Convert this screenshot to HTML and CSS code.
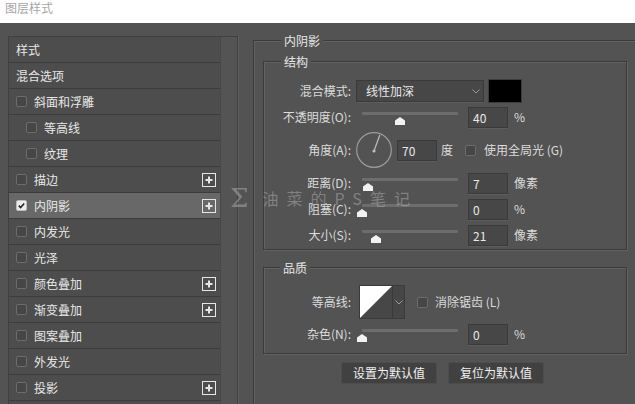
FILE: index.html
```html
<!DOCTYPE html>
<html lang="zh-CN">
<head>
<meta charset="utf-8">
<title>图层样式</title>
<link rel="stylesheet" href="styles.css">
</head>
<body>
<div class="titlebar">图层样式</div>
<div class="main">
  <div class="sidebar">
    <div class="list">
      <div class="row">样式</div>
      <div class="row">混合选项</div>
      <div class="row"><span class="cb"></span>斜面和浮雕</div>
      <div class="row sub"><span class="cb"></span>等高线</div>
      <div class="row sub"><span class="cb"></span>纹理</div>
      <div class="row"><span class="cb"></span>描边<svg class="plus" viewBox="0 0 14 14"><rect x="0.5" y="0.5" width="13" height="13" fill="none" stroke="#e6e6e6"/><path d="M7 3.5v7M3.5 7h7" stroke="#e6e6e6" stroke-width="2"/></svg></div>
      <div class="row active"><span class="cb checked"><svg viewBox="0 0 10 10"><path d="M2 5.2l2 2 4-4.4" fill="none" stroke="#222" stroke-width="1.8"/></svg></span>内阴影<svg class="plus" viewBox="0 0 14 14"><rect x="0.5" y="0.5" width="13" height="13" fill="none" stroke="#e6e6e6"/><path d="M7 3.5v7M3.5 7h7" stroke="#e6e6e6" stroke-width="2"/></svg></div>
      <div class="row"><span class="cb"></span>内发光</div>
      <div class="row"><span class="cb"></span>光泽</div>
      <div class="row"><span class="cb"></span>颜色叠加<svg class="plus" viewBox="0 0 14 14"><rect x="0.5" y="0.5" width="13" height="13" fill="none" stroke="#e6e6e6"/><path d="M7 3.5v7M3.5 7h7" stroke="#e6e6e6" stroke-width="2"/></svg></div>
      <div class="row"><span class="cb"></span>渐变叠加<svg class="plus" viewBox="0 0 14 14"><rect x="0.5" y="0.5" width="13" height="13" fill="none" stroke="#e6e6e6"/><path d="M7 3.5v7M3.5 7h7" stroke="#e6e6e6" stroke-width="2"/></svg></div>
      <div class="row"><span class="cb"></span>图案叠加</div>
      <div class="row"><span class="cb"></span>外发光</div>
      <div class="row"><span class="cb"></span>投影<svg class="plus" viewBox="0 0 14 14"><rect x="0.5" y="0.5" width="13" height="13" fill="none" stroke="#e6e6e6"/><path d="M7 3.5v7M3.5 7h7" stroke="#e6e6e6" stroke-width="2"/></svg></div>
    </div>
    <div class="gutter"></div>
  </div>

  <div class="content">
    <div class="group outer">
      <div class="legend legend-outer">内阴影</div>

      <div class="group inner struct">
        <div class="legend legend-struct">结构</div>

        <div class="frow r-blend">
          <span class="lbl">混合模式:</span>
          <div class="select">线性加深<svg class="chev" viewBox="0 0 8 5"><path d="M0.5 0.5l3.5 3.5 3.5-3.5" fill="none" stroke="#9a9a9a"/></svg></div>
          <div class="swatch"></div>
        </div>

        <div class="frow slider-row">
          <span class="lbl">不透明度(O):</span>
          <div class="slider"><div class="track"></div><div class="thumb" style="margin-left:33px"></div></div>
          <div class="num">40</div><span class="unit">%</span>
        </div>

        <div class="frow r-angle">
          <span class="lbl">角度(A):</span>
          <svg class="dial" viewBox="0 0 36 36"><circle cx="18" cy="18" r="17.3" fill="none" stroke="#9c9c9c" stroke-width="1.2"/><path d="M18 19L23.8 3" stroke="#bdbdbd" stroke-width="1.2"/><circle cx="18" cy="19" r="1.6" fill="#bdbdbd"/></svg>
          <div class="num num-angle">70</div><span class="unit deg">度</span>
          <span class="cb cb-right"></span><span class="opt">使用全局光 (G)</span>
        </div>

        <div class="frow slider-row">
          <span class="lbl">距离(D):</span>
          <div class="slider"><div class="track"></div><div class="thumb" style="margin-left:1px"></div></div>
          <div class="num">7</div><span class="unit">像素</span>
        </div>

        <div class="frow slider-row">
          <span class="lbl">阻塞(C):</span>
          <div class="slider"><div class="track"></div><div class="thumb" style="margin-left:-5px"></div></div>
          <div class="num">0</div><span class="unit">%</span>
        </div>

        <div class="frow slider-row">
          <span class="lbl">大小(S):</span>
          <div class="slider"><div class="track"></div><div class="thumb" style="margin-left:9px"></div></div>
          <div class="num">21</div><span class="unit">像素</span>
        </div>
      </div>

      <div class="group inner quality">
        <div class="legend legend-quality">品质</div>

        <div class="frow r-contour">
          <span class="lbl">等高线:</span>
          <div class="contour">
            <svg class="curve" viewBox="0 0 33 34" preserveAspectRatio="none"><rect width="33" height="34" fill="#474747"/><path d="M0 0H33L0 34Z" fill="#ffffff"/></svg>
            <div class="cdrop"><svg class="chev" viewBox="0 0 8 5"><path d="M0.5 0.5l3.5 3.5 3.5-3.5" fill="none" stroke="#9a9a9a"/></svg></div>
          </div>
          <span class="cb cb-right2"></span><span class="opt">消除锯齿 (L)</span>
        </div>

        <div class="frow slider-row r-noise">
          <span class="lbl">杂色(N):</span>
          <div class="slider"><div class="track"></div><div class="thumb" style="margin-left:-5px"></div></div>
          <div class="num">0</div><span class="unit">%</span>
        </div>
      </div>

      <div class="buttons">
        <div class="btn">设置为默认值</div>
        <div class="btn">复位为默认值</div>
      </div>
    </div>
  </div>
</div>

<div class="watermark"><span class="sigma">Σ</span><span class="wm-text">油菜的PS笔记</span></div>
</body>
</html>
```

FILE: styles.css
```css
* { box-sizing: border-box; }

html, body {
  margin: 0;
  padding: 0;
}

body {
  width: 635px;
  height: 404px;
  overflow: hidden;
  background: #535353;
  color: #dedede;
  font-family: "Noto Sans CJK SC", "Noto Sans", sans-serif;
  font-size: 12px;
  line-height: 16px;
  position: relative;
}

.titlebar {
  height: 23px;
  background: #ffffff;
  color: #a6a6a6;
  padding: 0 0 0 5px;
  line-height: 16px;
  font-size: 12px;
}

.main {
  display: flex;
  height: 381px;
  overflow: hidden;
}

/* ---------- sidebar ---------- */
.sidebar {
  margin: 13px 0 0 8px;
  width: 230px;
  border: 1px solid #404040;
  border-bottom: none;
  display: flex;
  box-shadow: 1px 0 0 #5e5e5e;
}

.list {
  width: 211px;
  background: #4d4d4d;
}

.row {
  height: 26px;
  border-bottom: 1px solid #3c3c3c;
  display: flex;
  align-items: center;
  padding-left: 7px;
  padding-right: 4px;
  color: #e8e8e8;
}

.row.sub { padding-left: 17px; }

.row.active { background: #686868; }

.cb {
  width: 11px;
  height: 11px;
  border: 1px solid #6c6c6c;
  border-radius: 2px;
  background: #464646;
  margin-right: 7px;
  flex: none;
  display: flex;
}

.cb svg { width: 100%; height: 100%; display: block; }

.cb.checked {
  background: #ececec;
  border-color: #bdbdbd;
}

.plus {
  margin-left: auto;
  width: 14px;
  height: 14px;
  display: block;
}

.gutter {
  flex: 1;
  background: #545454;
  border-left: 1px solid #474747;
}

/* ---------- content ---------- */
.content {
  flex: 1;
  margin-left: 15px;
  padding-top: 17px;
  display: flex;
  flex-direction: column;
}

.group {
  border: 1px solid #3b3b3b;
  box-shadow: inset 1px 1px 0 #626262, 1px 1px 0 #626262;
}

.outer {
  flex: 1;
  border-right: none;
  border-bottom: none;
  padding-left: 9px;
  box-shadow: inset 1px 1px 0 #626262;
}

.legend {
  margin-top: -8px;
  height: 16px;
  line-height: 16px;
  width: fit-content;
  padding: 0 3px;
  background: #535353;
  color: #e6e6e6;
}

.legend-outer { margin-left: 18px; }

.inner {
  width: 364px;
}

.struct {
  margin-top: 12px;
  padding-bottom: 1px;
}

.legend-struct { margin-left: 17px; margin-bottom: 8px; }

.quality {
  margin-top: 17px;
  padding-bottom: 6px;
}

.legend-quality { margin-left: 16px; margin-bottom: 9px; }

.frow {
  display: flex;
  align-items: center;
  height: 26px;
}

.lbl {
  width: 87px;
  text-align: right;
  color: #dcdcdc;
  flex: none;
}

.select {
  margin-left: 5px;
  width: 128px;
  height: 22px;
  background: #474747;
  border: 1px solid #3a3a3a;
  box-shadow: 0 1px 0 #5d5d5d;
  padding-left: 9px;
  display: flex;
  align-items: center;
  color: #e8e8e8;
}

.chev {
  width: 8px;
  height: 5px;
  display: block;
}

.select .chev { margin-left: auto; margin-right: 3px; }

.swatch {
  margin-left: 4px;
  width: 34px;
  height: 24px;
  background: #000;
  border: 1px solid #3c3c3c;
}

.slider-row { align-items: flex-start; }

.slider-row .lbl,
.slider-row .num,
.slider-row .unit { align-self: center; }

.slider {
  margin-left: 11px;
  width: 96px;
  padding-top: 8px;
  display: flex;
  flex-direction: column;
}

.track {
  height: 3px;
  background: #6d6d6d;
  border-radius: 1px;
}

.thumb {
  width: 10px;
  height: 8px;
  margin-top: 2px;
  background: #f2f2f2;
  clip-path: polygon(50% 0, 100% 45%, 100% 100%, 0 100%, 0 45%);
}

.num {
  margin-left: 10px;
  width: 40px;
  height: 21px;
  background: #474747;
  border: 1px solid #3a3a3a;
  box-shadow: 0 1px 0 #5d5d5d;
  padding-left: 4px;
  line-height: 19px;
  color: #e8e8e8;
}

.unit {
  margin-left: 6px;
  color: #dcdcdc;
}

.r-angle {
  height: 36px;
  margin-top: 2px;
  margin-bottom: 2px;
}

.dial {
  margin-left: 5px;
  width: 36px;
  height: 36px;
  display: block;
  flex: none;
}

.num-angle { margin-left: 5px; }

.deg { margin-left: 4px; }

.cb-right { margin-left: 12px; margin-right: 8px; }

.opt { color: #dcdcdc; }

.r-contour { height: 34px; }

.contour {
  margin-left: 8px;
  display: flex;
  height: 34px;
  border: 1px solid #3a3a3a;
}

.curve {
  width: 32px;
  height: 32px;
  display: block;
}

.cdrop {
  width: 12px;
  background: #464646;
  border-left: 1px solid #3a3a3a;
  display: flex;
  align-items: center;
  justify-content: center;
}

.cb-right2 { margin-left: 12px; margin-right: 7px; }

.r-noise { margin-top: 2px; }

.buttons {
  display: flex;
  gap: 11px;
  margin-top: 8px;
  margin-left: 78px;
}

.btn {
  width: 96px;
  height: 22px;
  background: #414141;
  border: 1px solid #4d4d4d;
  border-radius: 2px;
  text-align: center;
  line-height: 20px;
  color: #f0f0f0;
}

/* ---------- watermark overlay ---------- */
.watermark {
  position: absolute;
  left: 230px;
  top: 184px;
  display: flex;
  align-items: center;
  pointer-events: none;
  color: rgba(175, 175, 175, 0.5);
}

.sigma {
  font-family: "DejaVu Serif", serif;
  font-size: 26px;
  line-height: 28px;
  color: rgba(150, 150, 150, 0.7);
}

.wm-text {
  margin-left: 14px;
  font-size: 16px;
  letter-spacing: 8px;
  line-height: 20px;
}
```
